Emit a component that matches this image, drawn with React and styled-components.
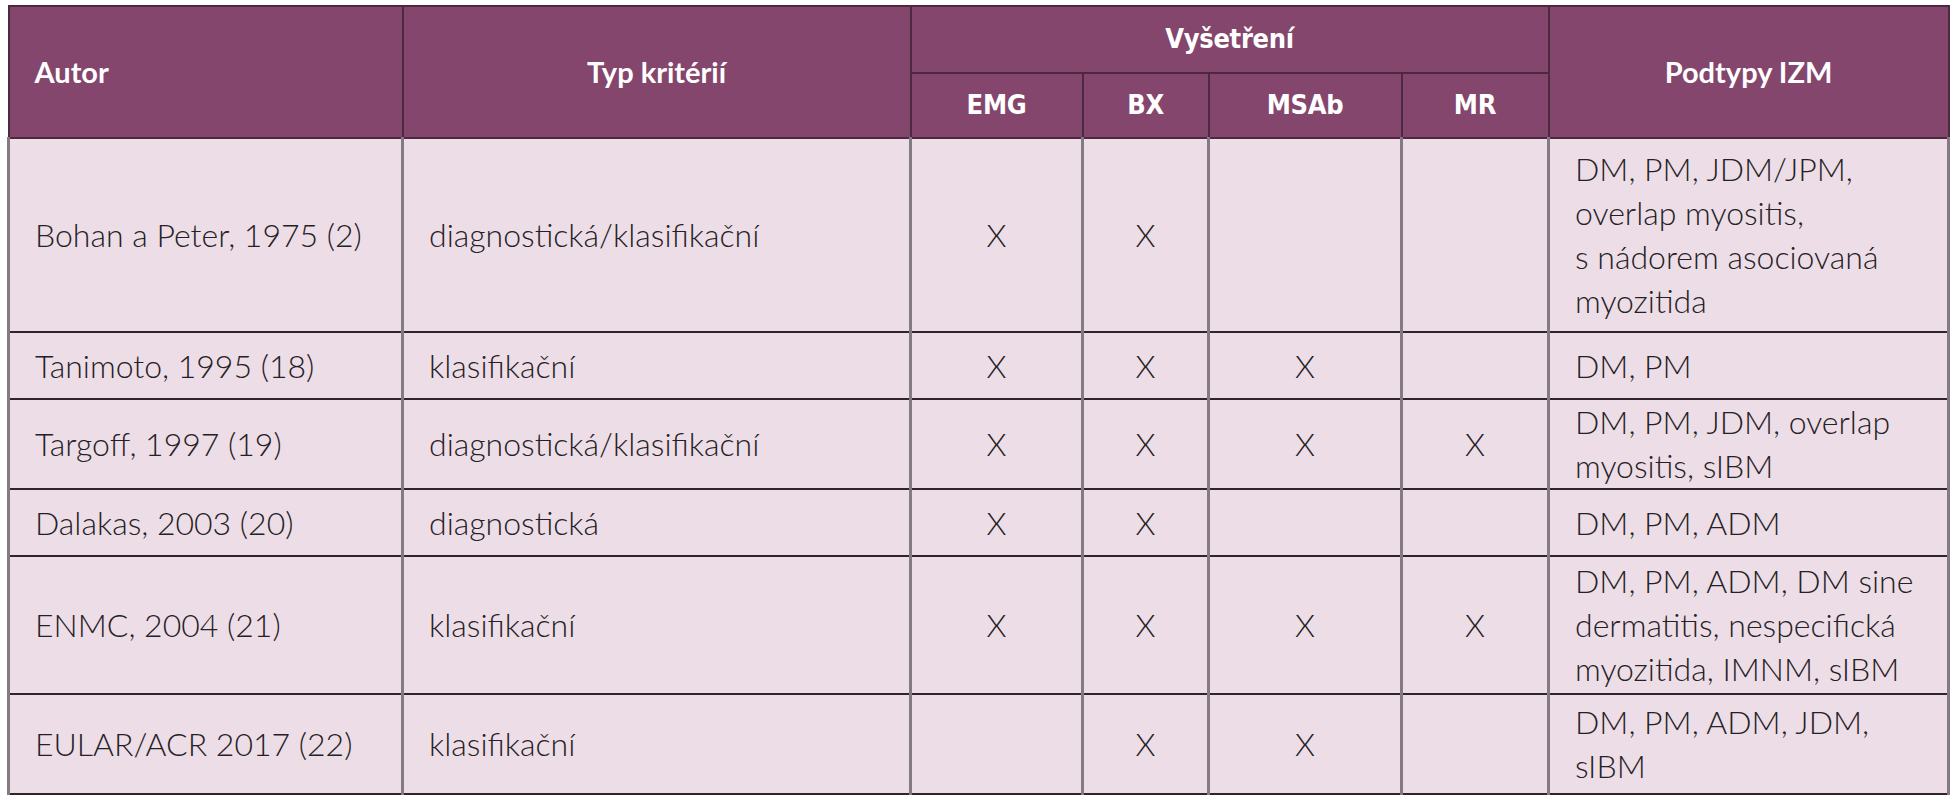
import styled, { createGlobalStyle } from 'styled-components';

const GlobalStyle = createGlobalStyle`
    html, body {
        margin: 0;
        padding: 0;
        background: #ffffff;
    }
`;

const rows = [
    {
        autor: 'Bohan a Peter, 1975 (2)',
        typ: 'diagnostická/klasifikační',
        marks: [true, true, false, false],
        podtypy: ['DM, PM, JDM/JPM,', 'overlap myositis,', 's nádorem asociovaná', 'myozitida'],
        pad: 8,
    },
    {
        autor: 'Tanimoto, 1995 (18)',
        typ: 'klasifikační',
        marks: [true, true, true, false],
        podtypy: ['DM, PM'],
    },
    {
        autor: 'Targoff, 1997 (19)',
        typ: 'diagnostická/klasifikační',
        marks: [true, true, true, true],
        podtypy: ['DM, PM, JDM, overlap', 'myositis, sIBM'],
        pad: 0,
    },
    {
        autor: 'Dalakas, 2003 (20)',
        typ: 'diagnostická',
        marks: [true, true, false, false],
        podtypy: ['DM, PM, ADM'],
    },
    {
        autor: 'ENMC, 2004 (21)',
        typ: 'klasifikační',
        marks: [true, true, true, true],
        podtypy: ['DM, PM, ADM, DM sine', 'dermatitis, nespecifická', 'myozitida, IMNM, sIBM'],
    },
    {
        autor: 'EULAR/ACR 2017 (22)',
        typ: 'klasifikační',
        marks: [false, true, true, false],
        podtypy: ['DM, PM, ADM, JDM,', 'sIBM'],
        pad: 5,
    },
];

const widths = [394, 508, 172, 126, 193, 147, 400];

export default function App(){
    return(
        <Page>
            <GlobalStyle />
            <Table>
                <colgroup>
                    {widths.map((w, i) => <col key={i} style={{ width: w }} />)}
                </colgroup>
                <thead>
                    <HeadRow $h={67}>
                        <HeadCell rowSpan={2} $align="left">Autor</HeadCell>
                        <HeadCell rowSpan={2}>Typ kritérií</HeadCell>
                        <HeadCell colSpan={4} $narrow>Vyšetření</HeadCell>
                        <HeadCell rowSpan={2}>Podtypy IZM</HeadCell>
                    </HeadRow>
                    <HeadRow $h={65}>
                        <HeadCell $narrow>EMG</HeadCell>
                        <HeadCell $narrow>BX</HeadCell>
                        <HeadCell $narrow>MSAb</HeadCell>
                        <HeadCell $narrow>MR</HeadCell>
                    </HeadRow>
                </thead>
                <tbody>
                    {rows.map((r) => (
                        <BodyRow key={r.autor}>
                            <Cell $pad={r.pad}>{r.autor}</Cell>
                            <Cell $pad={r.pad}>{r.typ}</Cell>
                            {r.marks.map((m, i) => (
                                <MarkCell key={i} $pad={r.pad}>{m ? 'X' : ''}</MarkCell>
                            ))}
                            <Cell $pad={r.pad}>
                                {r.podtypy.map((line, i) => (
                                    <Line key={i}>{line}</Line>
                                ))}
                            </Cell>
                        </BodyRow>
                    ))}
                </tbody>
            </Table>
        </Page>
    );
}

const Page = styled.div`
    padding: 5px 0 0 7px;
    width: 1959px;
    height: 800px;
    box-sizing: border-box;
    background: #ffffff;
`;

const Table = styled.table`
    width: 1940px;
    table-layout: fixed;
    border-collapse: collapse;
    border: 2px solid #7d747a;
    border-top-color: #b5b0b3;
`;

const HeadRow = styled.tr`
    height: ${(p) => p.$h}px;
    background: #84466c;
`;

const HeadCell = styled.th`
    padding: 0 25px;
    border: 2px solid #4b2a3f;
    color: #ffffff;
    text-align: ${(p) => p.$align || 'center'};
    font-family: ${(p) => p.$narrow
        ? '"DejaVu Sans Condensed", "Liberation Sans Narrow", sans-serif'
        : 'Lato, "Noto Sans", sans-serif'};
    font-weight: 700;
    font-size: ${(p) => (p.$narrow ? '27px' : '29px')};
    letter-spacing: ${(p) => (p.$narrow ? '-0.3px' : '0')};
    line-height: 1.2;
    vertical-align: middle;
`;

const BodyRow = styled.tr`
    height: 67px;
    background: #eddde7;
    border-bottom: 2px solid #2e2529;
`;

const Cell = styled.td`
    padding: ${(p) => p.$pad ?? 2}px 25px;
    border-left: 3px solid #847b82;
    border-right: 3px solid #847b82;
    border-bottom: 2px solid #2e2529;
    color: #242124;
    font-family: Lato, "Noto Sans", sans-serif;
    font-weight: 300;
    font-size: 32px;
    line-height: 44px;
    text-align: left;
    vertical-align: middle;
    white-space: nowrap;
`;

const MarkCell = styled(Cell)`
    padding-left: 0;
    padding-right: 0;
    text-align: center;
`;

const Line = styled.div`
    white-space: nowrap;
`;
